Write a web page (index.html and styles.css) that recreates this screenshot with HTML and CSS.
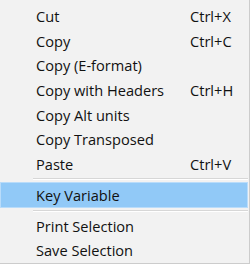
FILE: index.html
```html
<!DOCTYPE html>
<html lang="en">
<head>
    <meta charset="UTF-8">
    <title>Context menu</title>
    <link rel="stylesheet" href="styles.css">
</head>
<body>
    <div class="menu">
        <ul class="group first">
            <li><span class="label">Cut</span><span class="key">Ctrl+X</span></li>
            <li><span class="label">Copy</span><span class="key">Ctrl+C</span></li>
            <li><span class="label">Copy (E-format)</span></li>
            <li><span class="label">Copy with Headers</span><span class="key">Ctrl+H</span></li>
            <li><span class="label">Copy Alt units</span></li>
            <li><span class="label">Copy Transposed</span></li>
            <li><span class="label">Paste</span><span class="key">Ctrl+V</span></li>
        </ul>
        <div class="separator"></div>
        <ul class="group">
            <li class="active"><span class="label">Key Variable</span></li>
        </ul>
        <div class="separator"></div>
        <ul class="group last">
            <li><span class="label">Print Selection</span></li>
            <li><span class="label">Save Selection</span></li>
        </ul>
    </div>
</body>
</html>
```

FILE: styles.css
```css
body, html {
    margin: 0;
    padding: 0;
    background-color: #f2f2f2;
}

.menu {
    width: 249px;
    height: 263px;
    background-color: #f2f2f2;
    border-right: 1px solid #cccccc;
    border-bottom: 1px solid #cccccc;
    font-family: "Open Sans", Arial, sans-serif;
    font-size: 14.6px;
    color: #111;
    padding-top: 4px;
    box-sizing: border-box;
    height: 264px;
    width: 250px;
}

.group {
    list-style-type: none;
    margin: 0;
    padding: 0;
}

.group li {
    display: flex;
    align-items: center;
    height: 24.6px;
    padding-left: 35px;
    border: 1px solid transparent;
    box-sizing: border-box;
    margin-right: 1px;
}

.group li.active {
    height: 26px;
    background-color: #91c9f7;
    border-color: #b9dcfa;
}

.group.last li {
    height: 24px;
}

.label {
    width: 154px;
}

.key {
    white-space: nowrap;
}

.separator {
    height: 1px;
    margin: 2px 1px 2px 33px;
    background-color: #d7d7d7;
    border-bottom: 1px solid #ffffff;
}
```
